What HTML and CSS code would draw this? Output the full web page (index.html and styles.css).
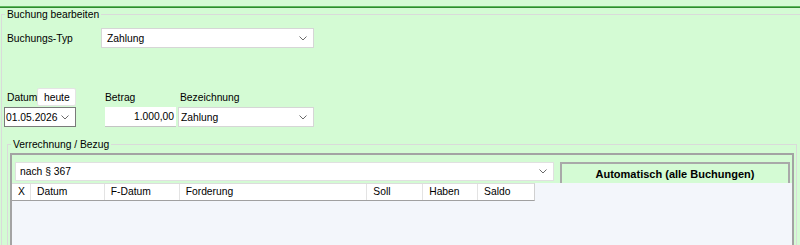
FILE: index.html
```html
<!DOCTYPE html>
<html lang="de">
<head>
<meta charset="utf-8">
<title>Buchung bearbeiten</title>
<link rel="stylesheet" href="styles.css">
</head>
<body>
<div class="topline"></div>
<fieldset class="group group-main">
  <legend class="group-title">Buchung bearbeiten</legend>
  <div class="type-row">
    <span class="label type-label">Buchungs-Typ</span>
    <div class="combo combo-type">
      <span class="combo-text">Zahlung</span>
      <svg class="chev" width="8" height="5" viewBox="0 0 8 5"><polyline points="0.5,0.5 4,4 7.5,0.5" fill="none" stroke="#6a6a6a" stroke-width="1"/></svg>
    </div>
  </div>
  <div class="entry-row">
    <div class="col col-date">
      <div class="col-head">
        <span class="label">Datum</span>
        <div class="btn-today">heute</div>
      </div>
      <div class="combo combo-date">
        <span class="combo-text">01.05.2026</span>
        <svg class="chev" width="8" height="5" viewBox="0 0 8 5"><polyline points="0.5,0.5 4,4 7.5,0.5" fill="none" stroke="#6a6a6a" stroke-width="1"/></svg>
      </div>
    </div>
    <div class="col col-amount">
      <div class="col-head"><span class="label">Betrag</span></div>
      <div class="amount">1.000,00</div>
    </div>
    <div class="col col-desc">
      <div class="col-head"><span class="label">Bezeichnung</span></div>
      <div class="combo combo-desc">
        <span class="combo-text">Zahlung</span>
        <svg class="chev" width="8" height="5" viewBox="0 0 8 5"><polyline points="0.5,0.5 4,4 7.5,0.5" fill="none" stroke="#6a6a6a" stroke-width="1"/></svg>
      </div>
    </div>
  </div>
  <fieldset class="group group-ref">
    <legend class="group-title">Verrechnung / Bezug</legend>
    <div class="panel">
      <div class="toolbar">
        <div class="combo combo-ref">
          <span class="combo-text">nach § 367</span>
          <svg class="chev" width="8" height="5" viewBox="0 0 8 5"><polyline points="0.5,0.5 4,4 7.5,0.5" fill="none" stroke="#6a6a6a" stroke-width="1"/></svg>
        </div>
        <div class="btn-auto">Automatisch (alle Buchungen)</div>
      </div>
      <div class="grid">
        <div class="grid-head">
          <div class="hc c-x">X</div>
          <div class="hc c-datum">Datum</div>
          <div class="hc c-fdatum">F-Datum</div>
          <div class="hc c-ford">Forderung</div>
          <div class="hc c-soll">Soll</div>
          <div class="hc c-haben">Haben</div>
          <div class="hc c-saldo">Saldo</div>
        </div>
      </div>
    </div>
  </fieldset>
</fieldset>
</body>
</html>
```
FILE: styles.css
```css
html, body {
  overflow: hidden;
}
body {
  margin: 0;
  padding-top: 6px;
  background: #d4fbd4;
  font-family: "Liberation Sans", Arial, sans-serif;
  font-size: 10.3px;
  color: #000;
  height: 245px;
  box-sizing: border-box;
}
.topline {
  height: 0;
  border-top: 1px solid #5cb85c;
  border-bottom: 1px solid #2e8b2e;
}
.group {
  margin: 0;
  padding: 0;
  border: 1px solid #dadada;
  min-inline-size: 0;
}
.group-main {
  margin-left: 1px;
  border-right: none;
  border-bottom: none;
}
.group-title {
  padding: 0 2px;
  margin-left: 3px;
  line-height: 13px;
  white-space: nowrap;
}
.label {
  white-space: nowrap;
}
.type-row {
  display: flex;
  align-items: center;
  margin-top: 7px;
  padding-left: 5px;
}
.type-label {
  width: 94px;
}
.combo {
  display: flex;
  align-items: center;
  justify-content: space-between;
  background: #fff;
  border: 1px solid #d6d6d6;
  box-sizing: border-box;
  height: 20px;
}
.combo-text {
  white-space: nowrap;
}
.chev {
  flex: none;
  margin-right: 6px;
}
.combo-type {
  width: 213px;
  padding-left: 5px;
}
.entry-row {
  display: flex;
  margin-top: 40px;
  padding-left: 2px;
}
.col {
  display: flex;
  flex-direction: column;
  gap: 1px;
}
.col-head {
  display: flex;
  align-items: center;
  justify-content: space-between;
  height: 18px;
}
.col-date {
  width: 72px;
}
.col-date .label {
  padding-left: 3px;
}
.btn-today {
  flex: none;
  width: 39px;
  height: 18px;
  box-sizing: border-box;
  background: #fff;
  border: 1px solid #e4e4e4;
  border-radius: 2px;
  display: flex;
  align-items: center;
  justify-content: center;
}
.combo-date {
  border-color: #7a7a7a;
  padding-left: 1px;
}
.combo-date .chev {
  margin-right: 6px;
}
.col-amount {
  width: 71px;
  margin-left: 29px;
}
.amount {
  height: 20px;
  box-sizing: border-box;
  background: #fff;
  border-bottom: 1px solid #c4c4c4;
  text-align: right;
  padding-right: 2px;
  line-height: 19px;
}
.col-desc {
  width: 136px;
  margin-left: 2px;
}
.col-desc .label {
  padding-left: 2px;
}
.combo-desc {
  padding-left: 2px;
}
.group-ref {
  margin: 11px 3px 0 5px;
  border-bottom: none;
}
.panel {
  margin: 2px 2px 0 2px;
  border: 2px solid #a3a3a3;
  border-bottom: none;
}
.toolbar {
  display: flex;
  align-items: flex-start;
  gap: 6px;
  padding: 7px 2px 0 3px;
}
.combo-ref {
  width: 539px;
  height: 19px;
  padding-left: 4px;
  border-color: #e0e0e0;
}
.btn-auto {
  width: 230px;
  height: 21px;
  box-sizing: border-box;
  border: 2px solid #a9a9a9;
  border-bottom: none;
  background: #d4fbd4;
  font-size: 11px;
  font-weight: bold;
  display: flex;
  align-items: center;
  justify-content: center;
  white-space: nowrap;
}
.grid {
  background: #f3f6fb;
  height: 62px;
}
.grid-head {
  display: flex;
  width: 523px;
  height: 18px;
  box-sizing: border-box;
  background: #fff;
  border-top: 1px solid #dcdcdc;
  border-bottom: 1px solid #a0a0a0;
  border-right: 1px solid #d0d0d0;
}
.hc {
  box-sizing: border-box;
  padding-left: 6px;
  line-height: 16px;
  border-left: 1px solid #e3e3e3;
  white-space: nowrap;
}
.c-x { width: 18px; border-left: none; }
.c-datum { width: 74px; }
.c-fdatum { width: 75px; }
.c-ford { width: 188px; }
.c-soll { width: 56px; }
.c-haben { width: 55px; }
.c-saldo { width: 57px; }
```
